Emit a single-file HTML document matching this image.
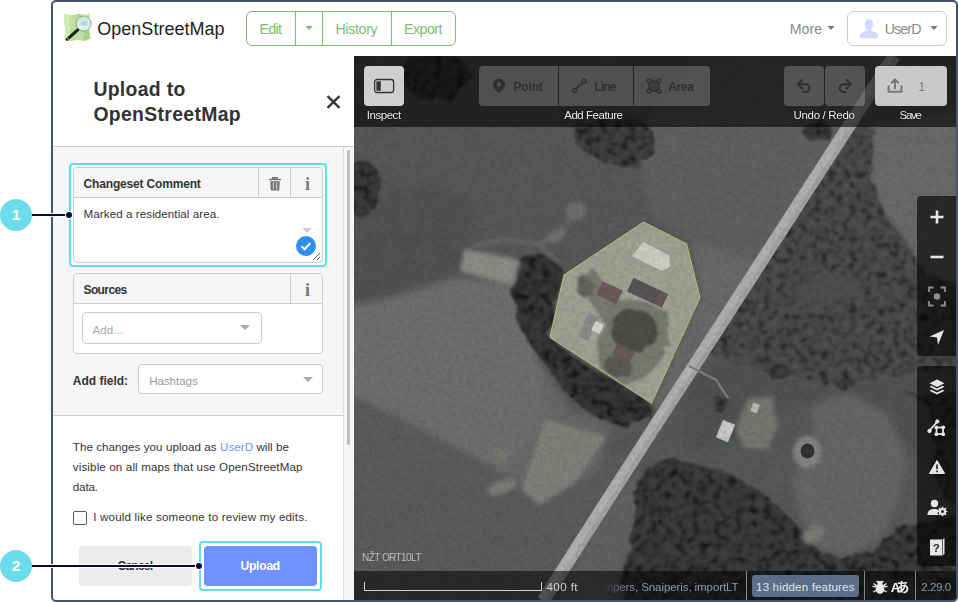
<!DOCTYPE html>
<html lang="en">
<head>
<meta charset="utf-8">
<title>Upload to OpenStreetMap</title>
<style>
*{box-sizing:border-box;margin:0;padding:0}
html,body{width:958px;height:602px;overflow:hidden;background:#fff}
body{position:relative;font-family:"Liberation Sans",sans-serif;font-size:12px;color:#333}
.abs{position:absolute}
.t{position:absolute;white-space:nowrap;line-height:1}
#frame{left:51px;top:0;width:907px;height:602px;border:2px solid #44536f;border-radius:5px;z-index:50;pointer-events:none}
/* header */
#hdr{left:53px;top:2px;width:903px;height:54px;background:#fff}
.nav{left:246px;top:11px;width:210px;height:35px;border:1px solid #7ebc6f;border-radius:6px}
.nav i{position:absolute;top:0;width:1px;height:33px;background:#7ebc6f}
.green{color:#7ebc6f}
.gray{color:#8a8a8a}
#userbtn{left:847px;top:11px;width:100px;height:35px;border:1px solid #cfcfcf;border-radius:6px}
/* sidebar */
#side{left:53px;top:56px;width:301px;height:544px;background:#fff}
#sidehead{left:53px;top:56px;width:301px;height:91px;background:#fff;border-bottom:1px solid #ccc}
#sec1{left:53px;top:147px;width:290px;height:269px;background:#f6f6f6;border-bottom:1px solid #ccc}
#track{left:343px;top:147px;width:11px;height:453px;background:#f6f6f6;border-left:1px solid #ddd}
#thumb{left:347px;top:150px;width:3px;height:295px;background:#bfbfbf;border-radius:2px}
.field{background:#fff;border:1px solid #ccc;border-radius:4px}
.flabel{position:absolute;left:0;top:0;right:0;height:30px;background:#f6f6f6;border-bottom:1px solid #ccc;border-radius:4px 4px 0 0}
.flabel i{position:absolute;top:0;width:1px;height:29px;background:#ccc}
.hl{border:2px solid #63ddec;border-radius:4px}
.badge{width:32px;height:32px;border-radius:16px;background:#6cdcea;color:#fff;font-weight:bold;font-size:15.500px;text-align:center;line-height:32px;z-index:62}
.ln{height:2.400px;background:#000d3c;box-shadow:0 0 0 1px #fff;z-index:60}
.dot{width:6.600px;height:6.600px;border-radius:4px;background:#000d3c;box-shadow:0 0 0 1px #fff;z-index:61}
/* map */
#map{left:354px;top:56px;width:602px;height:544px;background:#5a5c5b;overflow:hidden}
#topbar{left:354px;top:56px;width:602px;height:71px;background:rgba(0,0,0,.6)}
#botbar{left:354px;top:571px;width:602px;height:29px;background:rgba(0,0,0,.55)}
.tb{position:absolute;top:66px;height:40px;background:rgba(255,255,255,.21)}
.tbl{color:#ececec;font-size:12px;text-shadow:0 0 2px #000}
.tbd{color:#303030;font-size:12px;font-weight:bold}
.ctl{left:917px;width:39px;background:rgba(0,0,0,.62);border-radius:4px 0 0 4px}
</style>
</head>
<body>

<!-- ================= HEADER ================= -->
<div id="hdr" class="abs"></div>
<svg class="abs" style="left:63px;top:13px" width="30" height="30" viewBox="0 0 30 30">
  <defs><filter id="lgb" x="-10%" y="-10%" width="120%" height="120%"><feGaussianBlur stdDeviation="0.35"/></filter></defs>
  <g filter="url(#lgb)">
  <path d="M1.500 1 L8.500 2.200 L15 0.800 L21 2 L26.500 0.800 L27 9 L26 17 L27.500 25.300 L21 28 L14.500 26.800 L8 28.300 L1.500 26.800 L2.500 17 L1.200 9 Z" fill="#b9e39b"/>
  <path d="M1.500 1 L8.500 2.200 L9.500 10 L7.500 18 L8 28.300 L1.500 26.800 L2.500 17 L1.200 9Z" fill="#cdeeb2"/>
  <path d="M21 28 L27.500 25.300 L26 17 L21.500 18.500 L20.500 23Z" fill="#a0d580"/>
  <path d="M15 0.800 L21 2 L20 8 L14.500 9Z" fill="#aede8f"/>
  <path d="M6.500 2.500 L8 7 L7 11 L9 15 L8.200 19 L10 23" stroke="#e3b9a0" stroke-width="0.900" fill="none"/>
  <path d="M2.500 19.500 L8 18 L14 21.500 L19 20.500 L26.500 23.500" stroke="#b6d4ec" stroke-width="0.900" fill="none"/>
  <path d="M14 21.500 L16.500 25.800" stroke="#b6d4ec" stroke-width="0.900" fill="none"/>
  <path d="M16 18 L19 22 L24 21" stroke="#e9c9b0" stroke-width="0.800" fill="none"/>
  </g>
  <circle cx="20.600" cy="10.600" r="7.500" fill="#d9f1df" stroke="#7f9391" stroke-width="0.900"/>
  <path d="M14.500 9 q2.500 -5.500 8 -5.800 q3 1 4.500 4 q-5 -2 -12.500 1.800z" fill="#c3e9c0" opacity=".9"/>
  <path d="M17 10.500 q3 -3 7 -2.600 q1.800 2.600 -.6 4.600 q-3.400 1 -5 -.8 q-.2 -1 -1.400 -1.200z" fill="#b4d2f0"/>
  <path d="M14.200 17.300 L4.200 26.300" stroke="#1d1d1d" stroke-width="3.100" stroke-linecap="round"/>
  <path d="M14.100 15.900 L15.800 17.700" stroke="#2a2a2a" stroke-width="2.200"/>
  <path d="M4.100 24.700 L5.900 26.600" stroke="#d0a84a" stroke-width="1.100"/>
</svg>
<div class="t" id="t_osm" style="left:97.3px;top:19.5px;font-size:18px;letter-spacing:0.010px;color:#222">OpenStreetMap</div>

<div class="abs nav"><i style="left:48px"></i><i style="left:75px"></i><i style="left:144px"></i></div>
<div class="t green" id="t_edit" style="left:259.4px;top:21.7px;font-size:14.2px;letter-spacing:-0.651px;">Edit</div>
<svg class="abs" style="left:305px;top:26px" width="10" height="6"><path d="M0.300 0h7.600l-3.800 3.900z" fill="#7ebc6f"/></svg>
<div class="t green" id="t_hist" style="left:335.4px;top:21.7px;font-size:14.2px;letter-spacing:-0.309px;">History</div>
<div class="t green" id="t_exp" style="left:404.0px;top:21.7px;font-size:14.2px;letter-spacing:-0.523px;">Export</div>

<div class="t gray" id="t_more" style="left:789.7px;top:21.6px;font-size:14.2px;letter-spacing:0.024px;">More</div>
<svg class="abs" style="left:826.500px;top:26px" width="10" height="6"><path d="M0.300 0h7.400l-3.700 3.900z" fill="#777"/></svg>
<div id="userbtn" class="abs"></div>
<svg class="abs" style="left:858px;top:18px" width="22" height="22" viewBox="0 0 22 22"><path d="M11 1.2c2.7 0 4.3 2.1 4.3 4.9 0 2.300-1 4.100-2.100 5v1.300c2.900 1.100 6.800 2.400 6.800 5.200v2.600H2v-2.600c0-2.800 3.900-4.100 6.800-5.200v-1.300c-1.100-.9-2.100-2.700-2.100-5C6.700 3.300 8.300 1.200 11 1.200z" fill="#d6d6ff"/></svg>
<div class="t gray" id="t_user" style="left:884.7px;top:21.6px;font-size:14.2px;letter-spacing:-0.851px;">UserD</div>
<svg class="abs" style="left:930.300px;top:26px" width="10" height="6"><path d="M0.300 0h7.400l-3.700 3.900z" fill="#777"/></svg>

<!-- ================= SIDEBAR ================= -->
<div id="side" class="abs"></div>
<div id="sidehead" class="abs"></div>
<div class="t" id="t_h1" style="left:93.4px;top:80.2px;font-size:19.4px;letter-spacing:0.312px;font-weight:bold;color:#333">Upload to</div>
<div class="t" id="t_h2" style="left:93.4px;top:105.1px;font-size:19.4px;letter-spacing:0.332px;font-weight:bold;color:#333">OpenStreetMap</div>
<svg class="abs" style="left:326px;top:95px" width="15" height="14" viewBox="0 0 15 14"><path d="M1.500 1.200 L13.500 12.800 M13.500 1.200 L1.500 12.800" stroke="#333" stroke-width="2.300" fill="none"/></svg>

<div id="sec1" class="abs"></div>
<div id="track" class="abs"></div>
<div id="thumb" class="abs"></div>

<!-- changeset comment -->
<div class="abs hl" style="left:69px;top:163px;width:258px;height:104px;background:#fff"></div>
<div class="abs field" style="left:73px;top:167px;width:250px;height:96px">
  <div class="flabel"><i style="left:184px"></i><i style="left:216px"></i></div>
</div>
<div class="t" id="t_cc" style="left:83.6px;top:177.9px;font-size:12px;letter-spacing:-0.177px;font-weight:bold;color:#333">Changeset Comment</div>
<svg class="abs" style="left:268px;top:176px" width="14" height="16" viewBox="0 0 14 16"><path d="M1 3.500h12M4.800 3.200V1.700h4.400v1.500" stroke="#757575" stroke-width="1.500" fill="none"/><path d="M2.200 5.200h9.600l-.6 9.400H2.800z" fill="#757575"/><path d="M5.400 6.600v6.600M8.600 6.600v6.600" stroke="#c9c9c9" stroke-width="1.300"/></svg>
<div class="t" style="left:305px;top:174.700px;font-family:'Liberation Serif',serif;font-weight:bold;font-size:18px;color:#777">i</div>
<div class="t" id="t_cmt" style="left:83.6px;top:208.1px;font-size:11.6px;letter-spacing:0.074px;color:#333">Marked a residential area.</div>
<svg class="abs" style="left:302px;top:228px" width="10" height="6"><path d="M0 0h10l-5 5z" fill="#ccc"/></svg>
<svg class="abs" style="left:295px;top:235px" width="22" height="22" viewBox="0 0 22 22"><circle cx="11" cy="11" r="10" fill="#2f8ff0"/><path d="M6.500 11.300l3 3 5.800-6" stroke="#fff" stroke-width="2" fill="none"/></svg>
<svg class="abs" style="left:312px;top:252px" width="9" height="9"><path d="M8 1L1 8M8 5L5 8" stroke="#555" stroke-width="1"/></svg>

<!-- sources -->
<div class="abs field" style="left:73px;top:273px;width:250px;height:81px">
  <div class="flabel"><i style="left:216px"></i></div>
</div>
<div class="t" id="t_src" style="left:83.5px;top:283.8px;font-size:12px;letter-spacing:-0.610px;font-weight:bold;color:#333">Sources</div>
<div class="t" style="left:305px;top:280.700px;font-family:'Liberation Serif',serif;font-weight:bold;font-size:18px;color:#777">i</div>
<div class="abs field" style="left:82px;top:312px;width:180px;height:32px"></div>
<div class="t" id="t_add" style="left:92.5px;top:324.0px;font-size:11.6px;letter-spacing:0.041px;color:#aaa">Add...</div>
<svg class="abs" style="left:240px;top:325px" width="10" height="6"><path d="M0 0h10l-5 5z" fill="#aaa"/></svg>

<!-- add field -->
<div class="t" id="t_af" style="left:72.8px;top:375.0px;font-size:12px;letter-spacing:-0.003px;font-weight:bold;color:#333">Add field:</div>
<div class="abs field" style="left:138px;top:364px;width:185px;height:30px"></div>
<div class="t" id="t_hash" style="left:149.2px;top:375.4px;font-size:11.6px;letter-spacing:-0.069px;color:#999">Hashtags</div>
<svg class="abs" style="left:303px;top:377px" width="10" height="6"><path d="M0 0h10l-5 5z" fill="#aaa"/></svg>

<!-- upload info -->
<div class="t" id="t_l1" style="left:72.8px;top:440.9px;font-size:11.6px;letter-spacing:0.058px;color:#333">The changes you upload as <span style="color:#7092ff">UserD</span> will be</div>
<div class="t" id="t_l2" style="left:72.8px;top:461.3px;font-size:11.6px;letter-spacing:0.132px;color:#333">visible on all maps that use OpenStreetMap</div>
<div class="t" id="t_l3" style="left:72.8px;top:480.7px;font-size:11.6px;letter-spacing:-0.149px;color:#333">data.</div>
<div class="abs" style="left:73px;top:511px;width:14px;height:14px;border:1px solid #555;border-radius:2px;background:#fff"></div>
<div class="t" id="t_rev" style="left:93.2px;top:510.5px;font-size:11.6px;letter-spacing:0.174px;color:#333">I would like someone to review my edits.</div>

<div class="abs" style="left:79px;top:546px;width:113px;height:40px;background:#ececec;border-radius:4px"></div>
<div class="t" id="t_cancel" style="left:117.5px;top:560.3px;font-size:12px;letter-spacing:-0.752px;font-weight:bold;color:#333">Cancel</div>
<div class="abs hl" style="left:199px;top:541px;width:123px;height:50px;background:#fff"></div>
<div class="abs" style="left:204px;top:546px;width:113px;height:40px;background:#7092ff;border-radius:4px"></div>
<div class="t" id="t_upload" style="left:240.5px;top:560.3px;font-size:12px;letter-spacing:-0.194px;font-weight:bold;color:#fff">Upload</div>

<!-- annotations -->
<div class="abs ln" style="left:30px;top:213.700px;width:37px"></div>
<div class="abs dot" style="left:65.700px;top:211.600px"></div>
<div class="abs badge" style="left:0;top:199px">1</div>
<div class="abs ln" style="left:30px;top:564.700px;width:168px"></div>
<div class="abs dot" style="left:195.900px;top:562.600px"></div>
<div class="abs badge" style="left:0;top:550px">2</div>

<!-- ================= MAP ================= -->
<div id="map" class="abs">
<!--MAPSVG-->
<svg class="abs" style="left:0;top:0" width="602" height="544" viewBox="354 56 602 544">
<defs>
<filter color-interpolation-filters="sRGB" id="b1" x="-20%" y="-20%" width="140%" height="140%"><feGaussianBlur stdDeviation="0.7"/></filter>
<filter color-interpolation-filters="sRGB" id="b2" x="-20%" y="-20%" width="140%" height="140%"><feGaussianBlur stdDeviation="2"/></filter>
<filter color-interpolation-filters="sRGB" id="b4" x="-20%" y="-20%" width="140%" height="140%"><feGaussianBlur stdDeviation="3.500"/></filter>
<filter color-interpolation-filters="sRGB" id="forest" x="-10%" y="-10%" width="120%" height="120%">
 <feTurbulence type="fractalNoise" baseFrequency="0.07" numOctaves="2" seed="3" result="n"/>
 <feDisplacementMap in="SourceGraphic" in2="n" scale="12" result="d"/>
 <feTurbulence type="fractalNoise" baseFrequency="0.140" numOctaves="3" seed="8" result="t"/>
 <feColorMatrix in="t" type="matrix" values="1 0 0 0 0  1 0 0 0 0  1 0 0 0 0  0 0 0 0 1" result="c0"/>
 <feComponentTransfer in="c0" result="c"><feFuncR type="table" tableValues="0 0 0 0.120 0.420 0.560 0.640 0.700 0.720 0.720 0.720"/><feFuncG type="table" tableValues="0 0 0 0.120 0.420 0.560 0.640 0.700 0.720 0.720 0.720"/><feFuncB type="table" tableValues="0 0 0 0.120 0.420 0.560 0.640 0.700 0.720 0.720 0.720"/></feComponentTransfer>
 <feComposite in="d" in2="c" operator="arithmetic" k1="0" k2="1" k3="0.220" k4="-0.125" result="m"/>
 <feComposite in="m" in2="d" operator="in" result="f"/>
 <feGaussianBlur in="f" stdDeviation="0.8"/>
</filter>
<filter color-interpolation-filters="sRGB" id="rough" x="-10%" y="-10%" width="120%" height="120%"><feTurbulence type="fractalNoise" baseFrequency="0.09" numOctaves="2" seed="3" result="n"/><feDisplacementMap in="SourceGraphic" in2="n" scale="8"/><feGaussianBlur stdDeviation="1.100"/></filter>
<filter color-interpolation-filters="sRGB" id="noise" x="0" y="0" width="100%" height="100%"><feTurbulence type="fractalNoise" baseFrequency="0.06" numOctaves="3" seed="11"/><feColorMatrix type="matrix" values="0 0 0 0 0.45  0 0 0 0 0.45  0 0 0 0 0.45  2 0 0 0 -0.5"/></filter>
<filter color-interpolation-filters="sRGB" id="noise2" x="0" y="0" width="100%" height="100%"><feTurbulence type="fractalNoise" baseFrequency="0.25" numOctaves="2" seed="5"/><feColorMatrix type="matrix" values="0 0 0 0 0  0 0 0 0 0  0 0 0 0 0  1.400 0 0 0 -0.5"/></filter>
</defs>
<rect x="354" y="56" width="602" height="544" fill="#555857"/>
<g filter="url(#b4)">
<polygon points="346.0,190.0 420.0,185.0 480.0,200.0 472.0,246.0 458.0,272.0 398.0,291.0 346.0,302.0" fill="#4f5251" />
<polygon points="346.0,308.0 398.0,296.0 458.0,277.0 513.0,284.0 523.0,320.0 540.0,364.0 571.0,411.0 545.0,423.0 505.0,474.0 450.0,445.0 398.0,417.0 346.0,393.0" fill="#6e706d" />
<polygon points="346.0,393.0 398.0,417.0 450.0,445.0 505.0,474.0 540.0,500.0 600.0,470.0 640.0,440.0 560.0,610.0 346.0,610.0" fill="#585b5a" />
<polygon points="540.0,364.0 571.0,411.0 610.0,425.0 600.0,470.0 540.0,500.0 505.0,474.0 545.0,423.0" fill="#676967" />
<polygon points="700.0,56.0 900.0,56.0 760.0,270.0 705.0,300.0 690.0,243.0 650.0,215.0 640.0,130.0" fill="#5e615f" />
<polygon points="690.0,243.0 760.0,262.0 705.0,350.0 662.0,414.0 652.0,403.0 700.0,298.0" fill="#686a67" />
<polygon points="872.0,126.0 960.0,110.0 960.0,285.0 922.0,272.0 905.0,240.0 882.0,212.0 870.0,178.0" fill="#686b69" />
<polygon points="690.0,380.0 720.0,355.0 770.0,372.0 836.0,386.0 920.0,372.0 960.0,372.0 960.0,470.0 900.0,440.0 800.0,400.0 740.0,440.0 700.0,450.0 680.0,440.0" fill="#4f5251" />
<polygon points="812.0,405.0 850.0,392.0 888.0,415.0 906.0,455.0 900.0,500.0 880.0,540.0 850.0,555.0 820.0,550.0 803.0,520.0 790.0,480.0 812.0,440.0" fill="#646764" />
<polygon points="560.0,600.0 600.0,510.0 640.0,470.0 650.0,500.0 625.0,560.0 610.0,610.0" fill="#5f625f" />
</g>
<g filter="url(#forest)">
<polygon points="858.0,126.0 874.0,130.0 872.0,180.0 884.0,214.0 906.0,242.0 924.0,274.0 960.0,286.0 960.0,372.0 918.0,372.0 836.0,386.0 769.0,372.0 716.0,356.0 700.0,350.0 740.0,290.0 790.0,222.0 828.0,166.0" fill="#454847" />
<polygon points="516.0,259.7 528.0,251.8 543.9,253.8 559.8,265.7 563.8,275.7 555.8,299.6 549.8,337.5 571.8,355.4 595.7,371.4 619.6,383.3 643.5,397.3 651.5,407.3 645.0,420.0 625.0,428.0 600.0,420.0 580.0,405.0 563.8,391.3 547.8,367.4 531.9,347.5 516.0,319.6 512.0,291.6" fill="#2f3231" />
<polygon points="622.0,600.0 635.0,496.0 647.0,469.0 667.0,457.0 698.0,465.0 729.0,473.0 756.0,488.0 776.0,504.0 795.0,523.0 819.0,551.0 842.0,559.0 873.0,551.0 897.0,527.0 920.0,523.0 960.0,510.0 960.0,610.0 622.0,610.0" fill="#343736" />
<polygon points="905.0,395.0 925.0,400.0 935.0,430.0 930.0,470.0 945.0,500.0 960.0,505.0 960.0,390.0" fill="#3a3d3c" />
<ellipse cx="362.0" cy="189.0" rx="18.0" ry="27.0" fill="#323534" transform="rotate(10 362.0 189.0)" />
<polygon points="578.0,124.0 600.0,118.0 640.0,120.0 652.0,130.0 654.0,152.0 636.0,167.0 598.0,160.0 576.0,144.0" fill="#383b3a" />
<ellipse cx="817.0" cy="131.0" rx="15.0" ry="10.0" fill="#363938" transform="rotate(0 817.0 131.0)" />
<ellipse cx="436.0" cy="76.0" rx="34.0" ry="24.0" fill="#363938" transform="rotate(0 436.0 76.0)" />
<ellipse cx="721.0" cy="404.0" rx="8.0" ry="9.0" fill="#363938" transform="rotate(0 721.0 404.0)" />
<ellipse cx="846.0" cy="384.0" rx="9.0" ry="7.0" fill="#363938" transform="rotate(0 846.0 384.0)" />
<ellipse cx="780.0" cy="372.0" rx="12.0" ry="8.0" fill="#363938" transform="rotate(0 780.0 372.0)" />
</g>
<ellipse cx="826.0" cy="290.0" rx="34.0" ry="14.0" fill="#4b4e4c" transform="rotate(-8 826.0 290.0)" filter="url(#b4)"/>
<g filter="url(#b2)">
<polygon points="464.0,249.0 521.0,260.0 513.0,286.0 460.0,271.0" fill="#8d8d89" />
<polygon points="545.0,419.0 606.0,437.0 576.0,482.0 539.0,505.0 521.0,489.0" fill="#81817d" />
<ellipse cx="502.0" cy="487.0" rx="16.0" ry="7.0" fill="#7c7c78" transform="rotate(-20 502.0 487.0)" />
<ellipse cx="500.0" cy="455.0" rx="9.0" ry="7.0" fill="#767874" transform="rotate(0 500.0 455.0)" />
<ellipse cx="576.0" cy="211.0" rx="11.0" ry="9.0" fill="#6f716e" transform="rotate(0 576.0 211.0)" />
<path d="M470 246 L505 240 L540 244 L566 226 L580 206 M540 244 L556 262" stroke="#6c6e6b" stroke-width="3" fill="none"/>
<ellipse cx="556.0" cy="236.0" rx="10.0" ry="6.0" fill="#727471" transform="rotate(-30 556.0 236.0)" />
<polygon points="748.0,398.0 772.0,396.0 778.0,425.0 768.0,450.0 745.0,448.0 735.0,430.0" fill="#757772" />
<ellipse cx="807.0" cy="452.0" rx="14.0" ry="16.0" fill="#858783" transform="rotate(0 807.0 452.0)" />
<ellipse cx="813.0" cy="535.0" rx="12.0" ry="8.0" fill="#7a7c78" transform="rotate(-30 813.0 535.0)" />
</g>
<ellipse cx="807.5" cy="451.0" rx="7.0" ry="7.5" fill="#2b2e2d" transform="rotate(0 807.5 451.0)" filter="url(#b1)"/>
<g filter="url(#b1)">
<path d="M894 56 L848.500 126.600 L620.200 480 L543.500 600" stroke="#a6a6a6" stroke-width="13" fill="none"/>
<path d="M891.500 56 L846 126.600 L617.700 480 L541 600" stroke="#b4b4b4" stroke-width="7" fill="none"/>
<path d="M689 366 L716 380 L728 398" stroke="#7c7e7b" stroke-width="2.500" fill="none"/>
</g>
<polygon points="643.5,222.0 686.6,243.8 700.0,297.6 651.5,403.3 549.8,337.5 563.8,275.0" fill="#a3a395" filter="url(#b1)"/>
<g filter="url(#rough)">
<polygon points="576.0,276.0 596.0,270.0 612.0,300.0 640.0,300.0 668.0,312.0 668.0,345.0 650.0,375.0 625.0,385.0 600.0,368.0 596.0,345.0 606.0,325.0 590.0,300.0" fill="#797b70" />
<ellipse cx="634.0" cy="330.0" rx="23.0" ry="21.0" fill="#4a4d47" transform="rotate(0 634.0 330.0)" />
<ellipse cx="618.0" cy="366.0" rx="13.0" ry="11.0" fill="#575a52" transform="rotate(0 618.0 366.0)" />
<ellipse cx="585.0" cy="287.0" rx="8.0" ry="10.0" fill="#62655d" transform="rotate(0 585.0 287.0)" />
</g>
<g filter="url(#b1)">
<polygon points="643.0,242.0 669.0,255.0 670.0,267.0 662.0,271.0 632.0,256.0" fill="#d3d3c8" />
<rect x="598.6" y="285.2" width="22.0" height="15.0" fill="#6a5b5c" transform="rotate(25 609.6 292.7)" />
<rect x="628.5" y="285.2" width="38.0" height="15.0" fill="#575256" transform="rotate(25 647.5 292.7)" />
<rect x="656.5" y="292.0" width="9.0" height="14.0" fill="#69575a" transform="rotate(25 661.0 299.0)" />
<rect x="583.1" y="313.7" width="11.0" height="26.0" fill="#8b8e8b" transform="rotate(25 588.6 326.7)" />
<rect x="593.0" y="322.5" width="9.0" height="10.0" fill="#d8d8d4" transform="rotate(25 597.5 327.5)" />
<rect x="613.9" y="346.9" width="19.0" height="13.0" fill="#665952" transform="rotate(25 623.4 353.4)" />
<rect x="719.0" y="421.5" width="13.0" height="19.0" fill="#cfd1cf" transform="rotate(22 725.5 431.0)" />
<rect x="751.5" y="403.5" width="7.0" height="9.0" fill="#b9bbb7" transform="rotate(20 755.0 408.0)" />
</g>
<polygon points="643.5,222.0 686.6,243.8 700.0,297.6 651.5,403.3 549.8,337.5 563.8,275.0" fill="none" stroke="#cfcf7c" stroke-width="1" stroke-opacity=".8"/>
<rect x="354" y="56" width="602" height="544" filter="url(#noise)" opacity=".10"/>
<rect x="354" y="56" width="602" height="544" filter="url(#noise2)" opacity=".12"/>
</svg>
<!--/MAPSVG-->
</div>
<div id="topbar" class="abs"></div>
<div id="botbar" class="abs"></div>
<!--MAPUI-->
<!-- top bar buttons -->
<div class="abs" style="left:364px;top:66px;width:40px;height:40px;background:#cfcfcf;border-radius:4px"></div>
<svg class="abs" style="left:373px;top:78px" width="22" height="16" viewBox="0 0 22 16"><rect x="1.600" y="1.500" width="19" height="13" rx="2.500" fill="none" stroke="#333" stroke-width="1.300"/><rect x="3.400" y="3.300" width="4.400" height="9.400" fill="#333"/></svg>
<div class="t tbl" id="m_insp" style="left:366.7px;top:110.2px;font-size:11.5px;letter-spacing:-0.446px;">Inspect</div>

<div class="tb" style="left:479px;width:79px;border-radius:4px 0 0 4px"></div>
<div class="tb" style="left:559px;width:74px"></div>
<div class="tb" style="left:634px;width:76px;border-radius:0 4px 4px 0"></div>
<svg class="abs" style="left:492px;top:78px" width="14" height="16" viewBox="0 0 14 16"><path d="M7 1C3.700 1 1 3.600 1 6.800 1 10.600 5.500 13.800 7 15c1.500-1.200 6-4.400 6-8.200C13 3.600 10.300 1 7 1zm0 3.600a2.200 2.200 0 1 1 0 4.400 2.200 2.200 0 0 1 0-4.400z" fill="#303030" fill-rule="evenodd"/></svg>
<div class="t tbd" id="m_point" style="left:513.5px;top:80.6px;font-size:12px;letter-spacing:-0.175px;">Point</div>
<svg class="abs" style="left:571px;top:78px" width="16" height="16" viewBox="0 0 16 16"><path d="M4.200 11.800L12 4" stroke="#303030" stroke-width="1.800"/><circle cx="3.300" cy="12.600" r="2" fill="none" stroke="#303030" stroke-width="1.400"/><circle cx="13" cy="3.300" r="2" fill="none" stroke="#303030" stroke-width="1.400"/></svg>
<div class="t tbd" id="m_line" style="left:594.6px;top:80.6px;font-size:12px;letter-spacing:-0.891px;">Line</div>
<svg class="abs" style="left:646px;top:78px" width="16" height="16" viewBox="0 0 16 16"><rect x="3.200" y="3.200" width="9.600" height="9.600" fill="#3d3d3d" stroke="#303030" stroke-width="1.600"/><g fill="#4b4c4c" stroke="#303030" stroke-width="1.300"><circle cx="2.800" cy="2.800" r="1.900"/><circle cx="13.200" cy="2.800" r="1.900"/><circle cx="2.800" cy="13.200" r="1.900"/><circle cx="13.200" cy="13.200" r="1.900"/></g></svg>
<div class="t tbd" id="m_area" style="left:668.5px;top:80.6px;font-size:12px;letter-spacing:-0.429px;">Area</div>
<div class="t tbl" id="m_addf" style="left:564.2px;top:110.1px;font-size:11.5px;letter-spacing:-0.450px;">Add Feature</div>

<div class="tb" style="left:784px;width:40px;border-radius:4px"></div>
<div class="tb" style="left:825px;width:40px;border-radius:4px"></div>
<svg class="abs" style="left:796px;top:77px" width="16" height="17" viewBox="0 0 16 17"><path d="M3.500 7.200h6a3.900 3.900 0 0 1 0 7.800H6.500" fill="none" stroke="#303030" stroke-width="2"/><path d="M6.800 2.400L2 7.200l4.800 4.800" fill="none" stroke="#303030" stroke-width="2"/></svg>
<svg class="abs" style="left:837px;top:77px" width="16" height="17" viewBox="0 0 16 17"><g transform="translate(16,0) scale(-1,1)"><path d="M3.500 7.200h6a3.900 3.900 0 0 1 0 7.800H6.500" fill="none" stroke="#303030" stroke-width="2"/><path d="M6.800 2.400L2 7.200l4.800 4.800" fill="none" stroke="#303030" stroke-width="2"/></g></svg>
<div class="t tbl" id="m_undo" style="left:793.5px;top:110.1px;font-size:11.5px;letter-spacing:-0.318px;">Undo / Redo</div>
<div class="abs" style="left:875px;top:66px;width:72px;height:40px;background:#c9c9c9;border-radius:4px"></div>
<svg class="abs" style="left:886px;top:77px" width="18" height="17" viewBox="0 0 18 17"><path d="M2.500 8.500v6.300h13V8.500" fill="none" stroke="#777" stroke-width="2"/><path d="M9 12V3M5.300 6.200L9 2.500l3.700 3.700" fill="none" stroke="#777" stroke-width="2"/></svg>
<div class="t" id="m_one" style="left:918.5px;top:80.8px;font-size:12px;letter-spacing:0.000px;color:#777">1</div>
<div class="t tbl" id="m_save" style="left:899.6px;top:110.1px;font-size:11.5px;letter-spacing:-1.340px;">Save</div>

<!-- map controls -->
<div class="abs ctl" style="top:196px;height:160px"></div>
<div class="abs ctl" style="top:366px;height:200px"></div>
<svg class="abs" style="left:917px;top:196px" width="39" height="160" viewBox="0 0 39 160">
 <path d="M13.500 21h13M20 14.500v13" stroke="#e6e6e6" stroke-width="2.600"/>
 <path d="M13.500 61h13" stroke="#e6e6e6" stroke-width="2.600"/>
 <g stroke="#8e8e8e" stroke-width="1.800" fill="none"><path d="M12 96v-4.500h4.500M23.500 91.500H28V96M28 105v4.500h-4.500M16.500 109.500H12V105"/></g><circle cx="20" cy="100.500" r="3.200" fill="#8e8e8e"/>
 <path d="M27 134L12.500 140.500l7.500 1 1 7.500z" fill="#e6e6e6"/>
</svg>
<svg class="abs" style="left:917px;top:366px" width="39" height="200" viewBox="0 0 39 200">
 <g fill="#e6e6e6">
  <path d="M20 13.500l7.500 3.700-7.500 3.700-7.500-3.700z"/><path d="M12.500 20.800l2-1 5.500 2.700 5.500-2.700 2 1-7.500 3.700z"/><path d="M12.500 24.800l2-1 5.500 2.700 5.500-2.700 2 1-7.500 3.700z"/>
 </g>
 <g stroke="#e6e6e6" fill="none"><path d="M12.500 64.500L20 56" stroke-width="1.800"/><circle cx="12.500" cy="65" r="1.700" fill="#e6e6e6" stroke-width="1"/><circle cx="20.300" cy="55.500" r="1.700" fill="#e6e6e6" stroke-width="1"/><rect x="19.500" y="61.500" width="6.500" height="6.500" stroke-width="1.800"/><g fill="#e6e6e6" stroke="none"><circle cx="19.300" cy="61.300" r="1.900"/><circle cx="26.200" cy="61.300" r="1.900"/><circle cx="19.300" cy="68.200" r="1.900"/><circle cx="26.200" cy="68.200" r="1.900"/></g></g>
 <path d="M20 94.500l7.600 13H12.400z" fill="#e6e6e6" stroke="#e6e6e6" stroke-width="1" stroke-linejoin="round"/><path d="M20 98.500v4.800M20 104.600v1.600" stroke="#2a2a2a" stroke-width="1.700"/>
 <g fill="#e6e6e6"><circle cx="17.500" cy="137.500" r="3.700"/><path d="M10.500 149c0-4.500 3-6 7-6 2 0 3.500.4 4.600 1.200-1.500 1.300-1.800 3-.8 4.800z"/><circle cx="25.500" cy="145.500" r="3.600"/><g stroke="#e6e6e6" stroke-width="1.700"><path d="M25.500 140.700v9.600M20.700 145.500h9.600M22.100 142.100l6.800 6.800M28.900 142.100l-6.800 6.800"/></g></g><circle cx="25.500" cy="145.500" r="1.500" fill="#2a2a2a"/>
 <path d="M13 173.500h12.500l2-1.500v16l-2 1.500H13z" fill="#e6e6e6"/><path d="M25.500 173.500v16" stroke="#2a2a2a" stroke-width=".7"/>
 <text x="19.300" y="186.300" text-anchor="middle" font-family="Liberation Sans, sans-serif" font-weight="bold" font-size="11.500" fill="#2a2a2a">?</text>
</svg>

<!-- attribution + bottom bar -->
<div class="t" id="m_attr" style="left:362.1px;top:552.7px;font-size:10px;letter-spacing:-0.562px;color:#bdbdbd">NŽT ORT10LT</div>
<div class="abs" style="left:364px;top:582px;width:178px;height:9px;border:1px solid #d0d0d0;border-top:none"></div>
<div class="t" id="m_ft" style="left:546.5px;top:580.9px;font-size:11.6px;letter-spacing:0.397px;color:#d0d0d0">400 ft</div>
<div class="t" id="m_contrib" style="left:603.4px;top:581.0px;font-size:11.6px;letter-spacing:-0.124px;color:#8f94ad;-webkit-mask-image:linear-gradient(90deg,transparent 0,#000 28px);mask-image:linear-gradient(90deg,transparent 0,#000 28px)">mpers, Snaiperis, importLT</div>
<div class="abs" style="left:746px;top:571px;width:1px;height:29px;background:#868686"></div>
<div class="abs" style="left:752px;top:575px;width:107px;height:22px;background:#5c6e87;border-radius:3px"></div>
<div class="t" id="m_hidden" style="left:756.1px;top:580.8px;font-size:11.6px;letter-spacing:0.138px;color:#dde2ea">13 hidden features</div>
<div class="abs" style="left:864px;top:571px;width:1px;height:29px;background:#868686"></div>
<svg class="abs" style="left:871px;top:579px" width="18" height="16" viewBox="0 0 18 16"><g fill="#eee"><ellipse cx="9" cy="9.500" rx="4.300" ry="5.300"/><circle cx="9" cy="4" r="2.300"/></g><path d="M5.500 2L7.500 4M12.500 2L10.500 4M1.500 7.500h15M2.500 13l3-2M15.500 13l-3-2M2.500 4.500l3 2M15.500 4.500l-3 2" stroke="#eee" stroke-width="1.400" fill="none"/></svg>
<div class="t" id="m_lang" style="left:890.8px;top:580.9px;font-size:13.3px;letter-spacing:-4.306px;font-weight:bold;color:#f0f0f0;font-family:'Liberation Sans','Noto Sans CJK JP',sans-serif">Aあ</div>
<div class="abs" style="left:915px;top:571px;width:1px;height:29px;background:#868686"></div>
<div class="t" id="m_ver" style="left:921.2px;top:580.8px;font-size:11.6px;letter-spacing:-0.427px;color:#8f94ad">2.29.0</div>
<!--/MAPUI-->

<div id="frame" class="abs"></div>
</body>
</html>
